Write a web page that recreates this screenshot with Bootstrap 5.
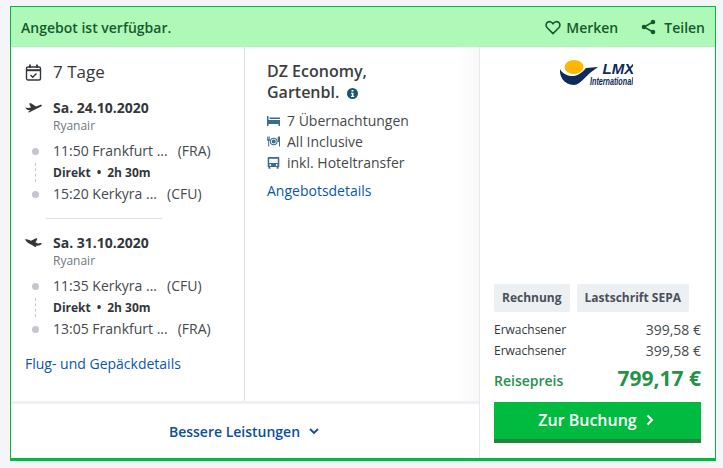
<!DOCTYPE html>
<html lang="de">
<head>
<meta charset="utf-8">
<title>Angebot</title>
<link href="https://cdn.jsdelivr.net/npm/bootstrap@5.3.0/dist/css/bootstrap.min.css" rel="stylesheet">
<style>
html,body{height:468px;overflow:hidden}
body{background:#f3f5f8;font-family:"Open Sans","Noto Sans",sans-serif;color:#33373b;font-size:14px;line-height:21px;padding:6px 7px 0 10px}
.offer{height:455px;border:1px solid #00bb3f;border-bottom-width:3px;background:#fff;display:flex;flex-direction:column}
.offer-head{height:40px;flex:none;background:#aef9b8;color:#17592e;display:flex;align-items:center;justify-content:space-between;padding:0 10px 0 10px;font-size:14px}
.offer-head svg{display:block}
.head-merken{margin:0 19px 0 5px}
.offer-body{flex:1;display:flex;min-height:0}
.left-part{width:468px;flex:none;display:flex;flex-direction:column}
.cols{flex:1;display:flex;min-height:0;border-bottom:3px solid #eef0f3}
.flight{width:234px;flex:none;border-right:1px solid #dde1e7;padding:14px 0 0 14px}
.hotel{flex:1;padding:14px 10px 0 22px;background:linear-gradient(90deg,#fff 90%,#f8f8f9 100%)}
.more{height:54px;display:flex;align-items:center;justify-content:center;gap:9px;color:#0b4ea2;font-weight:600;padding:1px 2px 0 0}
.side{flex:1;border-left:1px solid #e6e9ed;padding:0 14px 0 14px;display:flex;flex-direction:column}
.days{font-size:17px;line-height:22px;display:flex;align-items:center;gap:11px;height:22px;margin-bottom:16px}
.date-row{display:flex;gap:11px;align-items:center;font-weight:700;font-size:14px;line-height:18px}
.airline{font-size:12px;line-height:16px;color:#707780;padding-left:28px;margin-bottom:6px;margin-top:1px}
.stop{display:flex;line-height:22px;font-size:14px;color:#45494d}
.stop-dot{width:28px;flex:none;padding-left:7px;display:flex;align-items:center}
.stop-dot i{width:7px;height:7px;border-radius:50%;background:#c2c7cd;display:block}
.stop-code{margin-left:10px}
.leg{display:flex;font-size:12px;font-weight:700;line-height:21px;height:21px;color:#33373b}
.leg-line{width:28px;flex:none}
.leg-line i{display:block;width:0;height:19px;margin:1px 0 0 10px;border-left:1px dashed #c2c7cd}
.dot-sep{margin:0 6px}
.divider{width:116px;border-top:1px solid #dfe2e6;margin:13px 0 15px 21px}
.flight-link,.hotel-link{color:#0b56ad;text-decoration:none;font-size:14px}
.flight-link{display:block;margin-top:13px}
.hotel-title{font-size:16px;line-height:21px;font-weight:600;margin-bottom:7px;color:#3a3e42}
.info-ico{margin-left:4px}
.feat{display:flex;align-items:center;gap:7px;line-height:21px;color:#45494d}
.feat svg{flex:none}
.hotel-link{display:block;margin-top:7px}
.logo-box{display:flex;justify-content:center;padding:12px 4px 0 0;height:237px;flex:none}
.pay{display:flex;gap:7px;margin-bottom:7px}
.pay span{background:#edf0f3;border-radius:2px;color:#4a505a;font-weight:700;font-size:12px;line-height:28px;padding:0 8px}
.price-row{display:flex;justify-content:space-between;font-size:12px;line-height:21px}
.price-row b{font-weight:400;font-size:14px;color:#45494d}
.total{display:flex;justify-content:space-between;align-items:baseline;color:#25924a;font-weight:600;line-height:30px;margin-top:2px;margin-bottom:6px}
.total b{font-size:21px;font-weight:700}
.book{display:flex;align-items:center;justify-content:center;gap:9px;background:#00bb3f;border:0;border-bottom:4px solid #25843f;border-radius:0;color:#fff;height:41px;font-size:16px;font-weight:600;padding:0 3px 2px 0;width:100%}
.book:hover{background:#00bb3f;color:#fff}
</style>
</head>
<body>
<div class="offer">
  <div class="offer-head">
    <span class="fw-semibold">Angebot ist verfügbar.</span>
    <div class="d-flex align-items-center">
      <svg width="16" height="15" viewBox="0 0 16 15" fill="none" stroke="#17592e" stroke-width="1.6"><path d="M8 13.6 2.2 7.800C.6 6.100.8 3.700 2.300 2.400 3.900 1.100 6.300 1.400 8 3.700 9.700 1.400 12.100 1.100 13.700 2.400 15.200 3.700 15.400 6.100 13.800 7.800Z"/></svg>
      <span class="head-merken fw-semibold">Merken</span>
      <svg class="ms-1" width="15" height="16" viewBox="0 0 15 16" fill="#17592e" stroke="#17592e"><circle cx="3" cy="8" r="2.300" stroke="none"/><circle cx="12" cy="3" r="2.300" stroke="none"/><circle cx="12" cy="13" r="2.300" stroke="none"/><path d="M12 3 3 8l9 5" fill="none" stroke-width="1.500"/></svg>
      <span class="ms-2 fw-semibold">Teilen</span>
    </div>
  </div>
  <div class="offer-body">
    <div class="left-part">
      <div class="cols">
        <div class="flight">
          <div class="days">
            <svg width="17" height="17" viewBox="0 0 16 17" fill="none" stroke="#33373b" stroke-width="1.400"><rect x="1" y="3" width="14" height="13" rx="1.500"/><path d="M1 6.200h14" stroke-width="2"/><path d="M4.500 .5v3.500M11.500 .5v3.500" stroke-width="1.800"/><path d="m5 11 2.200 2.200 3.800-3.800"/></svg>
            <span>7 Tage</span>
          </div>
          <div class="date-row">
            <svg width="17" height="10" viewBox="0 0 17 10" fill="#33373b"><path d="M0 4.500 3 5l3-.5L4 .5 6 .2l5 3.300L15 2c1.500-.5 2.500.5 1.500 1.300L9 7 4 9.500 3 9l2.500-2C3 7.500 1.500 6.500 0 4.500Z"/></svg>
            <span>Sa. 24.10.2020</span>
          </div>
          <div class="airline">Ryanair</div>
          <div class="stop"><div class="stop-dot"><i></i></div><span>11:50 Frankfurt ...</span><span class="stop-code">(FRA)</span></div>
          <div class="leg"><div class="leg-line"><i></i></div><span>Direkt</span><span class="dot-sep">•</span><span>2h 30m</span></div>
          <div class="stop"><div class="stop-dot"><i></i></div><span>15:20 Kerkyra ...</span><span class="stop-code">(CFU)</span></div>
          <div class="divider"></div>
          <div class="date-row">
            <svg width="17" height="10" viewBox="0 0 17 10" fill="#33373b"><path d="M0 1.500c2-.5 4 .5 6 1.300L11 .3l1.500.3-2 3.900 2.500 1 2.500-.5 1.500.5c-1.500 2-4 2.500-6.500 2l1 1.500H10L7 7C4 6 1.500 4 0 1.500Z"/></svg>
            <span>Sa. 31.10.2020</span>
          </div>
          <div class="airline">Ryanair</div>
          <div class="stop"><div class="stop-dot"><i></i></div><span>11:35 Kerkyra ...</span><span class="stop-code">(CFU)</span></div>
          <div class="leg"><div class="leg-line"><i></i></div><span>Direkt</span><span class="dot-sep">•</span><span>2h 30m</span></div>
          <div class="stop"><div class="stop-dot"><i></i></div><span>13:05 Frankfurt ...</span><span class="stop-code">(FRA)</span></div>
          <a class="flight-link" href="#">Flug- und Gepäckdetails</a>
        </div>
        <div class="hotel">
          <div class="hotel-title">DZ Economy,<br>Gartenbl.
            <svg class="info-ico" width="11" height="11" viewBox="0 0 11 11"><circle cx="5.500" cy="5.500" r="5.500" fill="#15577a"/><path d="M4.500 2h2v1.600h-2zM4 4.700h2.500v3.200h.7v1.100H4V7.900h.8V5.800H4z" fill="#fff"/></svg>
          </div>
          <div class="feat">
            <svg width="13" height="10" viewBox="0 0 13 10" fill="#3c6b8c"><path d="M0 0h1.500v4H13v6h-1.500V8h-10v2H0z"/><path d="M2.500 1.500H13V3H2.500z"/></svg>
            <span>7 Übernachtungen</span>
          </div>
          <div class="feat">
            <svg width="13" height="11" viewBox="0 0 13 11" fill="#3c6b8c"><path d="M0 .5h.7v3h.5v-3h.6v3h.5v-3H3v4L2.200 5v5.500h-1V5L0 4.500zM11.500.5H13v10h-1V6h-1.300V2.500C10.700 1.300 11 .7 11.500.5z"/><circle cx="6.700" cy="5.500" r="3.800"/><circle cx="6.700" cy="5.500" r="2.800" fill="#fff"/><circle cx="6.700" cy="5.500" r="2"/></svg>
            <span>All Inclusive</span>
          </div>
          <div class="feat">
            <svg width="13" height="12" viewBox="0 0 13 12" fill="#3c6b8c"><path d="M2 0h9c.8 0 1.300.5 1.300 1.300V10h-.8v1.800H9.600V10H3.400v1.800H1.500V10H.7V1.300C.7.500 1.200 0 2 0Z"/><path d="M2.200 1.800h8.600V6H2.200z" fill="#fff"/><circle cx="3.300" cy="8" r=".9" fill="#fff"/><circle cx="9.700" cy="8" r=".9" fill="#fff"/></svg>
            <span>inkl. Hoteltransfer</span>
          </div>
          <a class="hotel-link" href="#">Angebotsdetails</a>
        </div>
      </div>
      <div class="more">
        <span>Bessere Leistungen</span>
        <svg width="10" height="7" viewBox="0 0 10 7" fill="none" stroke="#0b4ea2" stroke-width="1.800"><path d="m1 1 4 4 4-4"/></svg>
      </div>
    </div>
    <div class="side">
      <div class="logo-box">
        <svg width="74" height="30" viewBox="0 0 74 30">
          <path d="M1 10c-.6 7 3 15.500 14 16 7-.5 11-9 20-15L39 8 27 9C23 14 18 17.500 12 17 7 16.500 3 14 1 10z" fill="#0d2a5a"/>
          <ellipse cx="15" cy="8" rx="9.500" ry="7" fill="#ffb800"/>
          <text transform="translate(43.500 15)" font-family="Liberation Sans" font-weight="700" font-style="italic" font-size="15" fill="#0d2a5a">LMX</text>
          <text transform="translate(31 26) scale(.72 1)" font-family="Liberation Sans" font-weight="700" font-style="italic" font-size="10" fill="#0d2a5a">International</text>
        </svg>
      </div>
      <div class="pay"><span>Rechnung</span><span>Lastschrift SEPA</span></div>
      <div class="price-row"><span>Erwachsener</span><b>399,58 €</b></div>
      <div class="price-row"><span>Erwachsener</span><b>399,58 €</b></div>
      <div class="total"><span>Reisepreis</span><b>799,17 €</b></div>
      <button class="btn book" type="button"><span>Zur Buchung</span><svg width="8" height="12" viewBox="0 0 8 12" fill="none" stroke="#fff" stroke-width="2"><path d="m1.500 1.500 4.500 4.500-4.500 4.500"/></svg></button>
    </div>
  </div>
</div>
<script src="https://cdn.jsdelivr.net/npm/bootstrap@5.3.0/dist/js/bootstrap.bundle.min.js"></script>
</body>
</html>
